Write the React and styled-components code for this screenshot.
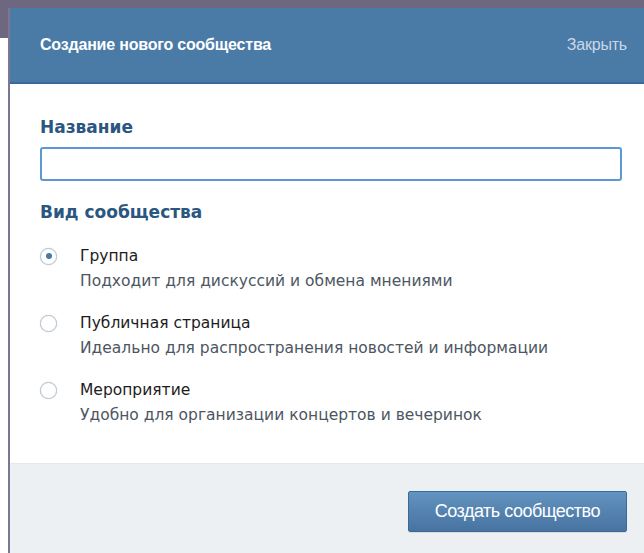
import React, { useState } from 'react';
import styled, { createGlobalStyle } from 'styled-components';

const GlobalStyle = createGlobalStyle`
  html, body {
    margin: 0;
    padding: 0;
    background: #ffffff;
  }
  body {
    font-family: "DejaVu Sans", Tahoma, Verdana, sans-serif;
  }
`;

const Backdrop = styled.div`
  height: 553px;
  border-top: 8px solid #6d6880;
  box-sizing: border-box;
  padding-left: 8px;
  background: linear-gradient(#6d6880, #6d6880) 0 0 / 8px 30px no-repeat, #ffffff;
`;

const Modal = styled.div`
  height: 100%;
  border-left: 2px solid #7d7693;
  display: flex;
  flex-direction: column;
  background: #ffffff;
`;

const Header = styled.div`
  height: 76px;
  flex-shrink: 0;
  box-sizing: border-box;
  background: #4a7ba7;
  border-bottom: 2px solid #356a99;
  display: flex;
  align-items: center;
  justify-content: space-between;
  padding: 0 17px 0 30px;
`;

const Title = styled.div`
  font-family: "Liberation Sans", Arial, sans-serif;
  font-weight: bold;
  font-size: 16px;
  color: #ffffff;
  letter-spacing: -0.2px;
`;

const CloseLink = styled.a`
  font-family: "Liberation Sans", Arial, sans-serif;
  font-size: 16px;
  color: #c9d8e7;
  cursor: pointer;
  letter-spacing: -0.2px;
`;

const Body = styled.div`
  flex: 1;
  padding: 33px 22px 0 30px;
`;

const Label = styled.div`
  font-weight: bold;
  font-size: 17px;
  line-height: 21px;
  color: #2a5680;
  margin-bottom: ${p => p.$gap || 8}px;
`;

const Input = styled.input`
  display: block;
  box-sizing: border-box;
  width: 100%;
  height: 34px;
  border: 2px solid #5a98d6;
  border-radius: 3px;
  outline: none;
  padding: 0 8px;
  font-family: inherit;
  font-size: 15px;
  margin-bottom: 21px;
`;

const Options = styled.div`
  display: flex;
  flex-direction: column;
  gap: 24px;
`;

const Option = styled.label`
  display: grid;
  grid-template-columns: 40px 1fr;
  align-items: center;
  row-gap: 7px;
  cursor: pointer;
`;

// round radio mark, filled dot when selected
const Radio = styled.span`
  width: 17px;
  height: 17px;
  box-sizing: border-box;
  border-radius: 50%;
  border: 1px solid #bcc6d2;
  box-shadow: 0 0 1px rgba(150, 165, 185, 0.7);
  display: flex;
  align-items: center;
  justify-content: center;
  background: #ffffff;

  &::after {
    content: "";
    width: 6px;
    height: 6px;
    border-radius: 50%;
    background: ${p => (p.$checked ? '#4a77a5' : 'transparent')};
  }
`;

const OptionTitle = styled.span`
  font-size: 15.5px;
  line-height: 18px;
  color: #1c1c1c;
`;

const OptionText = styled.span`
  grid-column: 2;
  font-size: 15.5px;
  line-height: 18px;
  color: #4d5662;
`;

const Footer = styled.div`
  height: 90px;
  flex-shrink: 0;
  background: #edf0f3;
  border-top: 1px solid #e3e7ec;
  display: flex;
  align-items: center;
  justify-content: flex-end;
  padding: 6px 17px 0 0;
  box-sizing: border-box;
`;

const Button = styled.button`
  height: 41px;
  padding: 0 26px;
  border: 1px solid #3a6a98;
  border-radius: 2px;
  background: linear-gradient(#6393c0, #4773a1);
  color: #ffffff;
  font-family: "Liberation Sans", Arial, sans-serif;
  font-size: 18px;
  letter-spacing: -0.5px;
  cursor: pointer;
  box-shadow: 0 1px 0 rgba(0, 0, 0, 0.08);
`;

const kinds = [
  { id: 'group', title: 'Группа', text: 'Подходит для дискуссий и обмена мнениями' },
  { id: 'page', title: 'Публичная страница', text: 'Идеально для распространения новостей и информации' },
  { id: 'event', title: 'Мероприятие', text: 'Удобно для организации концертов и вечеринок' },
];

export default function App() {
  const [kind, setKind] = useState('group');
  const [name, setName] = useState('');

  return (
    <>
      <GlobalStyle />
      <Backdrop>
        <Modal>
          <Header>
            <Title>Создание нового сообщества</Title>
            <CloseLink>Закрыть</CloseLink>
          </Header>
          <Body>
            <Label $gap={9}>Название</Label>
            <Input value={name} onChange={e => setName(e.target.value)} />
            <Label $gap={24}>Вид сообщества</Label>
            <Options>
              {kinds.map(k => (
                <Option key={k.id} onClick={() => setKind(k.id)}>
                  <Radio $checked={kind === k.id} />
                  <OptionTitle>{k.title}</OptionTitle>
                  <OptionText>{k.text}</OptionText>
                </Option>
              ))}
            </Options>
          </Body>
          <Footer>
            <Button>Создать сообщество</Button>
          </Footer>
        </Modal>
      </Backdrop>
    </>
  );
}
